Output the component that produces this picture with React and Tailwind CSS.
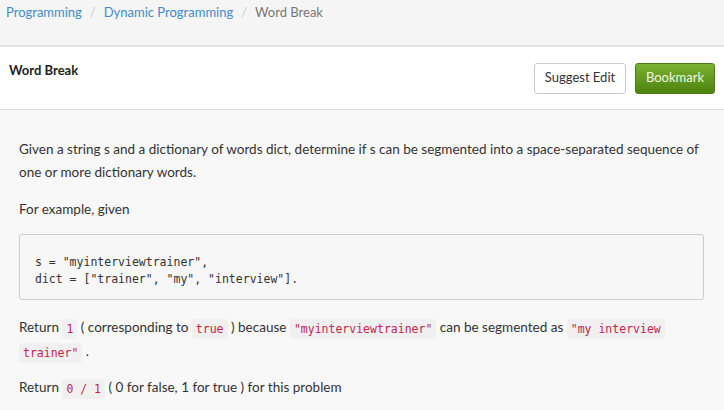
export default function App() {
  const code = 'inline-block rounded-[3px] bg-[#f0f0f0] px-[4px] py-[3px] align-middle font-["DejaVu_Sans_Mono",monospace] text-[11.5px] leading-[14px] text-[#c7254e]';

  return (
    <div className="min-h-[410px] bg-[#f8f8f8] font-['Lato',sans-serif] text-[13.5px] text-[#333]">
      <div className="h-[47px] border-b-2 border-[#e5e5e5] bg-[#f5f5f5] px-[6px] pt-[3px]">
        <div className="flex items-center text-[13px] leading-[18px]">
          <a className="text-[#428bca]">Programming</a>
          <span className="px-[8px] text-[#ccc]">/</span>
          <a className="text-[#428bca]">Dynamic Programming</a>
          <span className="px-[8px] text-[#ccc]">/</span>
          <span className="text-[#777]">Word Break</span>
        </div>
      </div>

      <div className="flex h-[63px] items-center justify-between border-b border-[#ddd] bg-white pl-[9px] pr-[9px]">
        <h1 className="-mt-[14px] text-[13px] font-bold text-[#222]">Word Break</h1>
        <div className="flex gap-[9px]">
          <button className="h-[31px] w-[92px] rounded-[3px] border border-[#ccc] bg-white text-[13px] text-[#333]">
            Suggest Edit
          </button>
          <button className="h-[31px] w-[80px] rounded-[3px] border border-[#4a7d12] bg-gradient-to-b from-[#7cb22f] to-[#4d830f] text-[13px] text-[#eef6e0]">
            Bookmark
          </button>
        </div>
      </div>

      <div className="px-[19px] pt-[28px] leading-[23px]">
        <p className="mb-[14px]">
          Given a string s and a dictionary of words dict, determine if s can be segmented into a space-separated sequence of one or more dictionary words.
        </p>
        <p className="mb-[13px]">For example, given</p>
        <pre className="mb-[15px] w-[685px] rounded-[3px] border border-[#ccc] bg-[#f7f7f7] px-[15px] pt-[19px] pb-[11px] font-['DejaVu_Sans_Mono',monospace] text-[11.5px] leading-[17px] text-[#333]">
{`s = "myinterviewtrainer",
dict = ["trainer", "my", "interview"].`}
        </pre>
        <p className="mb-[13px] leading-[24px]">
          Return <code className={code}>1</code> ( corresponding to <code className={code}>true</code> ) because{' '}
          <code className={code}>"myinterviewtrainer"</code> can be segmented as{' '}
          <code className={code}>"my interview</code>{' '}
          <code className={code}>trainer"</code> .
        </p>
        <p>
          Return <code className={code}>0 / 1</code> ( 0 for false, 1 for true ) for this problem
        </p>
      </div>
    </div>
  );
}
